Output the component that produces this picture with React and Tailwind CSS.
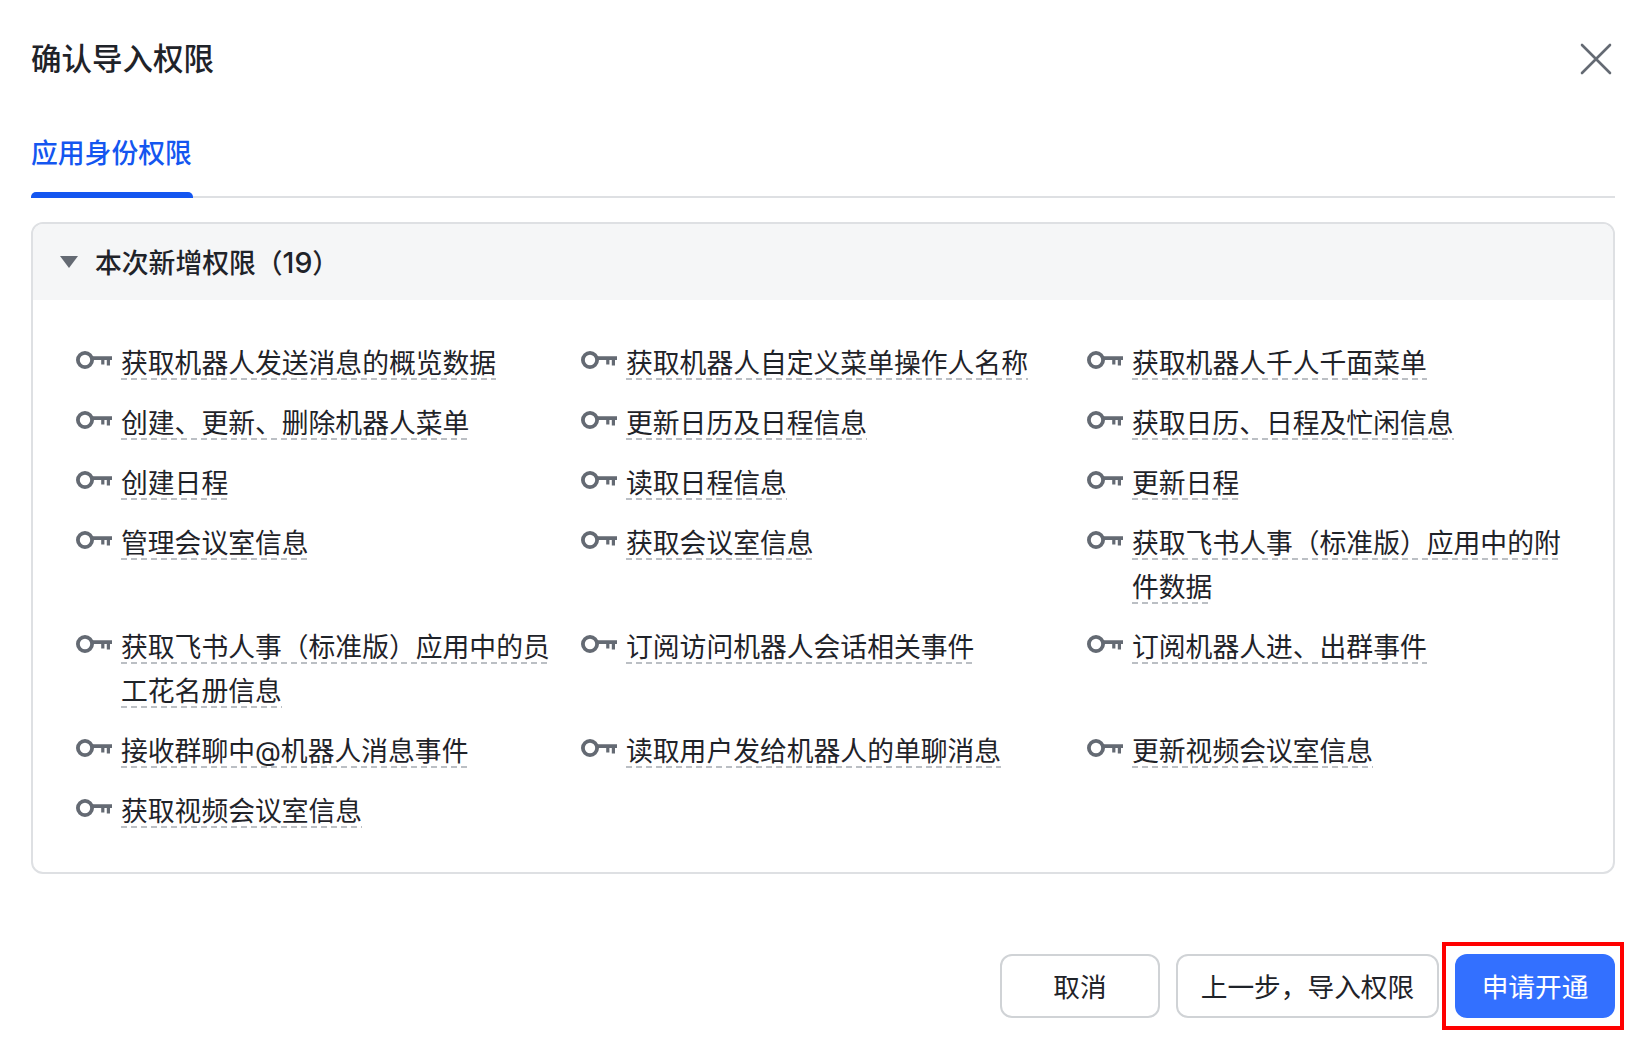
const items = [
  "获取机器人发送消息的概览数据","获取机器人自定义菜单操作人名称","获取机器人千人千面菜单",
  "创建、更新、删除机器人菜单","更新日历及日程信息","获取日历、日程及忙闲信息",
  "创建日程","读取日程信息","更新日程",
  "管理会议室信息","获取会议室信息","获取飞书人事（标准版）应用中的附件数据",
  "获取飞书人事（标准版）应用中的员工花名册信息","订阅访问机器人会话相关事件","订阅机器人进、出群事件",
  "接收群聊中@机器人消息事件","读取用户发给机器人的单聊消息","更新视频会议室信息",
  "获取视频会议室信息",
];

function Key() {
  return (
    <svg width="36" height="20" viewBox="0 0 36 20" className="shrink-0 mt-[9px]" fill="none">
      <circle cx="9" cy="10" r="7.1" stroke="#646a73" strokeWidth="3.8" />
      <path d="M16 6.2h20v3.8h-2v5.4h-3.2V10h-2.4v4.4h-3.2V10H16z" fill="#646a73" />
    </svg>
  );
}

export default function App() {
  return (
    <div className="relative w-[1650px] h-[1054px] overflow-hidden bg-white text-[#1f2329] font-['Inter','Noto_Sans_CJK_SC',sans-serif]">
      <div className="flex items-center justify-between pl-[31px] pr-[37px] pt-[35px] h-[82px]">
        <h1 className="text-[30.5px] leading-[46px] font-medium">确认导入权限</h1>
        <svg width="34" height="34" viewBox="0 0 34 34" fill="none" stroke="#646a73" strokeWidth="2.6" strokeLinecap="round">
          <path d="M3 3l28 28M31 3L3 31" />
        </svg>
      </div>
      <div className="ml-[31px] mr-[35px] mt-[50px] border-b-2 border-[#dee0e3] h-[66px] flex">
        <div className="relative w-[162px] text-[26.8px] leading-[40px] text-[#1456f0] font-medium pt-[1px]">
          应用身份权限
          <div className="absolute left-0 right-0 bottom-[-2px] h-[6px] rounded-t-[5px] bg-[#1456f0]" />
        </div>
      </div>
      <div className="ml-[31px] mr-[35px] mt-[24px] border-2 border-[#dee0e3] rounded-[12px] overflow-hidden h-[652px]">
        <div className="h-[76px] bg-[#f5f6f7] flex items-center pl-[27px]">
          <svg width="18" height="12" viewBox="0 0 18 12" className="mt-[-1px]"><path d="M0 0h18L9 12z" fill="#646a73" /></svg>
          <span className="ml-[17px] pt-[2px] text-[26.8px] leading-[40px] font-medium">本次新增权限（<span className="text-[28.5px]">19</span>）</span>
        </div>
        <div className="grid grid-cols-[505px_506px_500px] gap-y-[16px] pl-[43px] pt-[41px]">
          {items.map((t, i) => (
            <div key={i} className="flex gap-[9px] pr-[20px]">
              <Key />
              <div className="text-[26.8px] leading-[44px] min-w-0">
                <span className="box-decoration-clone pb-[1px] bg-no-repeat bg-[position:left_bottom] bg-[size:100%_2px] bg-[image:repeating-linear-gradient(90deg,#bbbfc4_0,#bbbfc4_6px,transparent_6px,transparent_10px)]">{t}</span>
              </div>
            </div>
          ))}
        </div>
      </div>
      <div className="flex justify-end gap-[16px] pr-[35px] mt-[80px]">
        <button className="w-[160px] h-[64px] pt-[3px] rounded-[12px] border-2 border-[#d0d3d6] bg-white text-[26.7px]">取消</button>
        <button className="w-[263px] h-[64px] pt-[3px] rounded-[12px] border-2 border-[#d0d3d6] bg-white text-[26.7px]">上一步，导入权限</button>
        <button className="w-[160px] h-[64px] pt-[3px] rounded-[12px] bg-[#3370ff] text-white text-[26.7px]">申请开通</button>
      </div>
      <div className="absolute left-[1442px] top-[942px] w-[182px] h-[88px] border-[4px] border-[#ff0000] pointer-events-none" />
    </div>
  );
}
